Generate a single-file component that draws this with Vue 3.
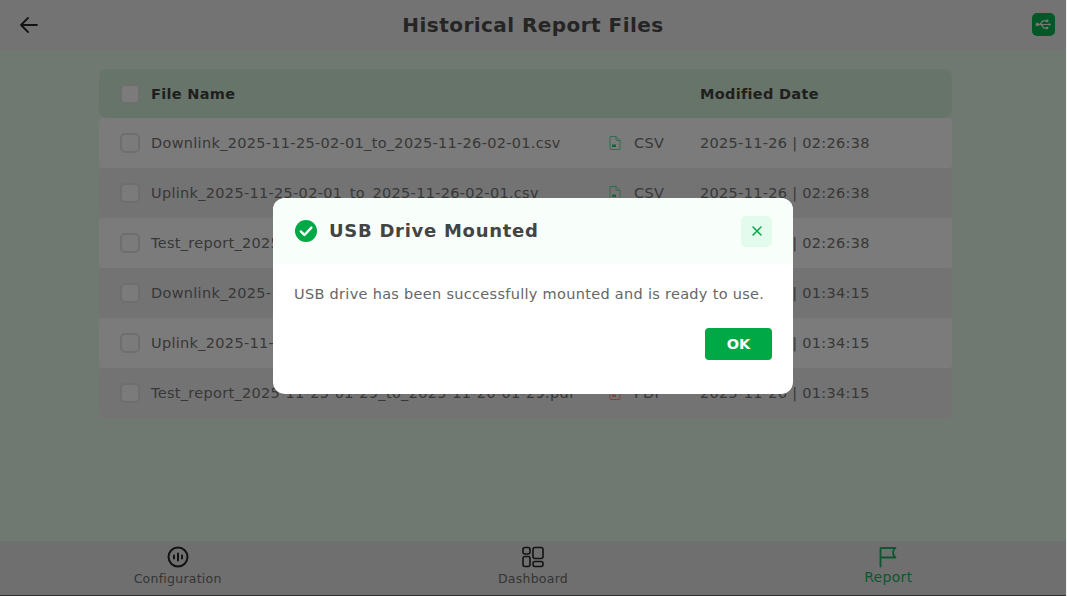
<script setup>
const files = [
  { name: 'Downlink_2025-11-25-02-01_to_2025-11-26-02-01.csv', type: 'CSV', date: '2025-11-26 | 02:26:38' },
  { name: 'Uplink_2025-11-25-02-01_to_2025-11-26-02-01.csv', type: 'CSV', date: '2025-11-26 | 02:26:38' },
  { name: 'Test_report_2025-11-25-02-01_to_2025-11-26-02-01.pdf', type: 'PDF', date: '2025-11-26 | 02:26:38' },
  { name: 'Downlink_2025-11-25-01-29_to_2025-11-26-01-29.csv', type: 'CSV', date: '2025-11-26 | 01:34:15' },
  { name: 'Uplink_2025-11-25-01-29_to_2025-11-26-01-29.csv', type: 'CSV', date: '2025-11-26 | 01:34:15' },
  { name: 'Test_report_2025-11-25-01-29_to_2025-11-26-01-29.pdf', type: 'PDF', date: '2025-11-26 | 01:34:15' },
]
</script>

<template>
  <div class="screen">
    <header class="topbar">
      <svg class="back" width="24" height="24" viewBox="0 0 24 24" fill="none" stroke="#222" stroke-width="1.8" stroke-linecap="round" stroke-linejoin="round">
        <path d="M20 12H4M11 5l-7 7 7 7" />
      </svg>
      <h1>Historical Report Files</h1>
      <div class="usb">
        <svg width="19" height="19" viewBox="0 0 16 16" fill="none" stroke="#ddd" stroke-width="1" stroke-linecap="round">
          <path d="M2.5 8h10M5 8l2.5-3H10M6 8l2.5 3H10" />
          <circle cx="2.8" cy="8" r="1.4" fill="#ddd" stroke="none" />
          <rect x="10" y="3.9" width="2.1" height="2.1" fill="#ddd" stroke="none" />
          <circle cx="11" cy="11" r="1.1" fill="#ddd" stroke="none" />
          <path d="M12.4 6.7 14.5 8l-2.1 1.3z" fill="#ddd" stroke="none" />
        </svg>
      </div>
    </header>

    <main class="content">
      <div class="table">
        <div class="row head">
          <span class="check"></span>
          <span class="name">File Name</span>
          <span class="type"></span>
          <span class="date">Modified Date</span>
        </div>
        <div v-for="f in files" :key="f.name" class="row">
          <span class="check"></span>
          <span class="name">{{ f.name }}</span>
          <span class="type">
            <svg width="14" height="16" viewBox="0 0 14 16" fill="none" :stroke="f.type === 'PDF' ? '#e87a72' : '#5cc492'" stroke-width="1" stroke-linejoin="round">
              <path d="M2 1.5h6l4 4v8a1 1 0 0 1-1 1H3a1 1 0 0 1-1-1z" />
              <path d="M8 1.5v3a1 1 0 0 0 1 1h3" />
              <rect x="4" y="9.5" width="4" height="2.5" :fill="f.type === 'PDF' ? '#e87a72' : '#2cb06c'" stroke="none" />
            </svg>
            {{ f.type }}
          </span>
          <span class="date">{{ f.date }}</span>
        </div>
      </div>
    </main>

    <nav class="bottom">
      <div class="tab">
        <svg width="24" height="24" viewBox="0 0 24 24" fill="none" stroke="#222" stroke-width="2" stroke-linecap="round">
          <circle cx="12" cy="12" r="9.5" />
          <path d="M8 10.5v3M12 8.5v7M16 10.5v3" />
        </svg>
        <span>Configuration</span>
      </div>
      <div class="tab">
        <svg width="24" height="24" viewBox="0 0 24 24" fill="none" stroke="#222" stroke-width="1.6" stroke-linejoin="round">
          <rect x="2" y="2.5" width="7" height="6.5" rx="2" />
          <rect x="2" y="11.5" width="7" height="10" rx="2" />
          <rect x="12" y="2.5" width="10" height="11" rx="2" />
          <rect x="12" y="16.5" width="10" height="5" rx="2" />
        </svg>
        <span>Dashboard</span>
      </div>
      <div class="tab active">
        <svg width="24" height="24" viewBox="0 0 24 24" fill="none" stroke="#1c9c58" stroke-width="1.8" stroke-linecap="round" stroke-linejoin="round">
          <path d="M4.5 21.5V3h15c-2.8 1.2-3.6 6.8 0 9.5h-15" />
        </svg>
        <span>Report</span>
      </div>
    </nav>

    <div class="overlay">
      <div class="modal">
        <div class="modal-head">
          <svg width="24" height="24" viewBox="0 0 24 24">
            <circle cx="12" cy="12" r="11" fill="#00a846" />
            <path d="M6.8 12.4l3.6 3.6 7-7.4" fill="none" stroke="#fff" stroke-width="2.4" stroke-linecap="round" stroke-linejoin="round" />
          </svg>
          <h2>USB Drive Mounted</h2>
          <button class="close">
            <svg width="12" height="12" viewBox="0 0 12 12" fill="none" stroke="#00a846" stroke-width="1.5" stroke-linecap="round">
              <path d="M2 2l8 8M10 2l-8 8" />
            </svg>
          </button>
        </div>
        <div class="modal-body">
          <p>USB drive has been successfully mounted and is ready to use.</p>
          <div class="actions"><button class="ok">OK</button></div>
        </div>
      </div>
    </div>
  </div>
</template>

<style>
body { margin: 0; }
</style>

<style scoped>
.screen {
  position: relative;
  width: 1067px;
  height: 596px;
  box-sizing: border-box;
  border-right: 1px solid #f2f2f2;
  overflow: hidden;
  display: flex;
  flex-direction: column;
  background: #cddbd0;
  font-family: "DejaVu Sans", sans-serif;
  color: #666;
}
.topbar {
  height: 50px;
  background: #d2d2d2;
  display: flex;
  align-items: center;
  justify-content: center;
  position: relative;
  flex-shrink: 0;
}
.topbar h1 {
  margin: 0;
  font-size: 20px;
  font-weight: 700;
  letter-spacing: 0.45px;
  color: #444;
}
.back { position: absolute; left: 17px; top: 13px; }
.usb {
  position: absolute;
  left: 1032px;
  top: 13px;
  width: 23px;
  height: 23px;
  border-radius: 5px;
  background: #08a048;
  display: flex;
  align-items: center;
  justify-content: center;
}
.content {
  flex: 1;
  padding: 19px 0 0 99px;
}
.table { width: 853px; }
.row {
  height: 50px;
  display: grid;
  grid-template-columns: 20px 468px 92px 1fr;
  align-items: center;
  padding-left: 21px;
  font-size: 14.5px;
  letter-spacing: 0.3px;
  color: #666;
  background: #d2d2d2;
  border-radius: 4px;
  box-sizing: border-box;
}
.row:nth-child(even) { background: #e0e0e0; }
.row.head {
  height: 49px;
  background: #bcd4c2;
  border-radius: 8px;
  font-weight: 700;
  color: #3a3a3a;
}
.check {
  width: 20px;
  height: 20px;
  box-sizing: border-box;
  border: 2px solid #c8c8c8;
  border-radius: 5px;
  background: #e0e0e0;
}
.name { padding-left: 11px; white-space: nowrap; }
.type {
  display: flex;
  align-items: center;
  gap: 12px;
}
.bottom {
  height: 55px;
  background: #cacaca;
  display: grid;
  grid-template-columns: repeat(3, 1fr);
  border-bottom: 1px solid #555;
  flex-shrink: 0;
  box-sizing: border-box;
}
.tab {
  display: flex;
  flex-direction: column;
  align-items: center;
  padding-top: 4px;
  gap: 2px;
  font-size: 12.5px;
  letter-spacing: 0.25px;
  color: #606060;
}
.tab svg { display: block; }
.tab.active {
  gap: 0;
  color: #1c9c58;
  font-size: 14px;
  letter-spacing: 0.3px;
}
.overlay {
  position: absolute;
  inset: 0;
  background: rgba(0, 0, 0, 0.45);
  display: flex;
  align-items: flex-start;
  justify-content: center;
}
.modal {
  margin-top: 198px;
  width: 520px;
  height: 196px;
  background: #fff;
  border-radius: 12px;
  overflow: hidden;
}
.modal-head {
  height: 66px;
  background: #f8fffa;
  display: flex;
  align-items: center;
  padding: 0 21px;
  gap: 11px;
  box-sizing: border-box;
}
.modal-head h2 {
  flex: 1;
  margin: 0 0 1px;
  font-size: 18px;
  font-weight: 700;
  letter-spacing: 0.72px;
  color: #444;
}
.close {
  width: 31px;
  height: 31px;
  border: none;
  border-radius: 5px;
  background: #e3fbec;
  display: flex;
  align-items: center;
  justify-content: center;
  padding: 0;
}
.modal-body { padding: 22px 21px 0; }
.modal-body p {
  margin: 0;
  font-size: 14.5px;
  letter-spacing: 0.3px;
  color: #666;
}
.actions {
  display: flex;
  justify-content: flex-end;
  margin-top: 26px;
}
.ok {
  width: 67px;
  height: 32px;
  border: none;
  border-radius: 4px;
  background: #00a846;
  color: #fff;
  font-family: inherit;
  font-size: 14.5px;
  font-weight: 700;
}
</style>
